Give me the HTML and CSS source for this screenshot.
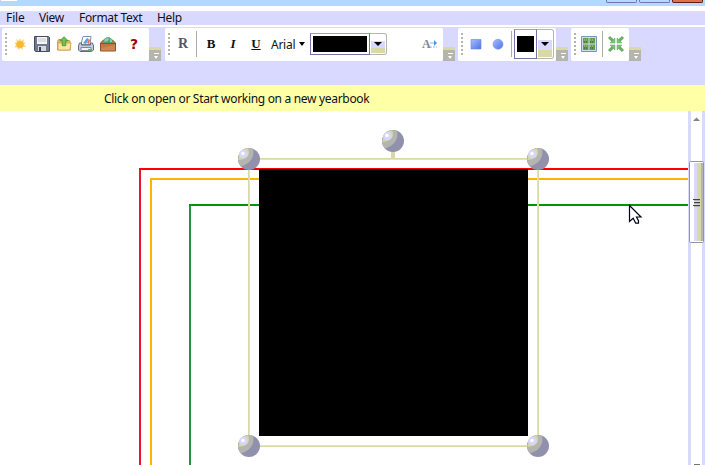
FILE: index.html
```html
<!DOCTYPE html>
<html lang="en">
<head>
<meta charset="utf-8">
<title>Yearbook editor</title>
<link rel="stylesheet" href="styles.css">
</head>
<body>
<div class="app">
  <header class="titlebar"><i class="app-icon"></i><i class="win"></i><i class="win"></i><i class="win close"></i></header>
  <nav class="menu"><span class="m-file">File</span><span class="m-view">View</span><span class="m-format">Format Text</span><span class="m-help">Help</span></nav>
  <div class="toolbars">
    <div class="group g1"><div class="tools">
      <i class="grip"></i>
      <svg class="icon" viewBox="0 0 16 16"><path d="M8 2l1.300 3L12 3.200l-.5 3.200L14 6.500 12 8.500l2 2.500-3.300-.3-.2 3.200L8.500 12 6 14l-.6-2.800-2.900.4 1.500-2.800L2.500 7l2.300-.8L4.300 3l2.700 1.800z" fill="#f9d581"/><circle cx="8" cy="8.500" r="3.600" fill="#fdb92c"/></svg>
      <svg class="icon" viewBox="0 0 16 16"><path d="M.5.5h14l1 1v14H1.500l-1-1z" fill="#717991" stroke="#454c60"/><path d="M3 1h10v7H3z" fill="#f5f5f5"/><path d="M4 3h8M4 5h8" stroke="#c5c8d0"/><path d="M4 10h8v5H4z" fill="#d5d8dd"/><path d="M5 11h2v4H5z" fill="#3d4250"/></svg>
      <svg class="icon" viewBox="0 0 16 16"><path d="M1.500 5.500l1-2h3l1 1h7l1 2v7.500h-13z" fill="#e9b65b" stroke="#c79b4d"/><path d="M2 7h13l-1 7H2z" fill="#ffe59e" stroke="#d5aa58"/><path d="M8 .7l4 4H9.800v5H6.200v-5H4z" fill="#6fc252" stroke="#3c903b" stroke-width=".8"/></svg>
      <svg class="icon" viewBox="0 0 16 16"><path d="M5 .5h8l-1 8H3z" fill="#fff" stroke="#7990b1"/><path d="M5 7l4-5 2 1-3 5z" fill="#55a5df"/><path d="M9 7l2-4 1 1-1 4z" fill="#e16b54"/><path d="M1.500 7h2v2h9V7h2l1 3v4l-2 1.500H2L.5 14v-4z" fill="#c5ccda" stroke="#626b82"/><path d="M3 11.500h10v3H3z" fill="#f2f4f8" stroke="#7e899c"/><path d="M10 14h4" stroke="#66b258" stroke-width="2"/></svg>
      <svg class="icon" viewBox="0 0 16 16"><path d="M.5 7L3.500 4h9l3 3v8H.5z" fill="#c17543" stroke="#8c522f"/><path d="M3 7a5 6 0 0 1 10 0z" fill="#4fa859"/><path d="M5 3l3-1.500 1 2-2 2H4zM10 2.500l2 1.500v2h-2z" fill="#8bc6dc"/><path d="M1 7.500h14" stroke="#8c522f"/><path d="M1 12l14-3v5.500H1z" fill="#da965f" opacity=".55"/></svg>
      <b class="question">?</b>
    </div><i class="overflow"></i></div>
    <div class="group g2"><div class="tools">
      <i class="grip"></i><b class="letter regular">R</b><i class="sep"></i><b class="letter bold">B</b><b class="letter italic">I</b><b class="letter under">U</b><span class="font-name">Arial</span><i class="caret"></i>
      <div class="combo wide"><div class="swatch"><i></i></div><div class="drop"><i class="caret"></i></div></div>
      <svg class="icon resize" viewBox="0 0 16 16"><text x="0" y="12">A</text><path d="M8 7h6" stroke="#8eb9ee"/><path d="M12 4l3 3-3 3z" fill="#4c95e9"/><path d="M8 11h7" stroke="#b2b7c7" stroke-dasharray="2 1"/></svg>
    </div><i class="overflow"></i></div>
    <div class="group g3"><div class="tools">
      <i class="grip"></i>
      <svg class="shape" viewBox="0 0 12 12"><defs><linearGradient id="blue" x2="1" y2="1"><stop stop-color="#a8bcff"/><stop offset="1" stop-color="#4f72e5"/></linearGradient></defs><path d="M1 1.500h10v9.500H1z" fill="url(#blue)" stroke="#6f83da" stroke-width=".6"/></svg>
      <svg class="shape second" viewBox="0 0 12 12"><circle cx="6" cy="6.300" r="5" fill="url(#blue)" stroke="#7790e9" stroke-width=".6"/></svg>
      <i class="sep"></i><div class="combo small"><div class="swatch"><i></i></div><div class="drop"><i class="caret"></i></div></div>
    </div><i class="overflow"></i></div>
    <div class="group g4"><div class="tools">
      <i class="grip"></i>
      <svg class="icon" viewBox="0 0 16 16"><path d="M.5.5h15v15H.5z" fill="#cddcef" stroke="#7895bf"/><path d="M2 2h5.500v5.500H2zM8.500 2H14v5.500H8.500zM2 8.500h5.500V14H2zM8.500 8.500H14V14H8.500z" fill="#669d4c"/><path d="M3 4h4M9 4h4M3 10h4M9 10h4" stroke="#b1d56f" stroke-dasharray="1 1"/><path d="M3 6h4M9 6h4M3 12h4M9 12h4" stroke="#315e35" stroke-dasharray="1 1"/></svg>
      <i class="sep"></i>
      <svg class="icon" viewBox="0 0 16 16"><path d="M1 1l4 4M15 1l-4 4M1 15l4-4M15 15l-4-4" stroke="#69ae65" stroke-width="3"/><path d="M7 2v5H2zM9 2v5h5zM7 14V9H2zM9 14V9h5z" fill="#7dc27a" stroke="#63a965" stroke-width=".5"/></svg>
    </div><i class="overflow"></i></div>
  </div>
  <div class="notice">Click on open or Start working on a new yearbook</div>
  <main class="workspace">
    <svg class="page" viewBox="0 111 688 354">
      <defs><g id="handle"><circle r="11" fill="#9291ad"/><path d="M-10.500-3A11 11 0 0 1 4-10.200C6-2 1 5-8 7.500A11 11 0 0 1-10.500-3z" fill="#b5b5b0"/><path d="M-9.500-5A11 11 0 0 1-1-10.800C2-4-2 0-10.500 1z" fill="#d5d5a8"/><circle cx="-5.500" cy="-5" r="4.300" fill="#d6d6f8"/><circle cx="-6" cy="-5.500" r="1.700" fill="#fff"/></g></defs>
      <g fill="none" stroke-width="2"><path d="M190 465V205H688" stroke="#009600"/><path d="M190 465V206" stroke="#22914a"/><path d="M151 465V179H688" stroke="#ffb400"/><path d="M140 465V169H688" stroke="#f00"/><path d="M140 465V170" stroke="#ef1235"/></g>
      <path d="M259 169h269v267H259z"/><path d="M259 168.500h269" stroke="#f00"/>
      <path d="M249 159.500h289M249.500 159v287M249 445.500h289M537.500 159v287" stroke="#dedfdc"/>
      <path d="M249 158.500h289M248.500 159v287M249 446.500h289M538.500 159v287" stroke="#d9d9a6"/>
      <path d="M393 150v8" stroke="#d9d9a6" stroke-width="4"/>
      <use href="#handle" x="249" y="159"/><use href="#handle" x="538" y="159"/><use href="#handle" x="393" y="141"/><use href="#handle" x="249" y="446"/><use href="#handle" x="538" y="446"/>
      <path d="M629.500 205.500v16l3.700-3.300 2.500 5h2.800v-2.500l-2-3.700h4.500z" fill="#fff" stroke="#000018" stroke-width="1.200"/>
    </svg>
    <aside class="scrollbar"><svg viewBox="0 0 17 354"><path d="M5 10l3.500-3.500L12 10z" fill="#85857d"/><rect x="1.500" y="50.500" width="14" height="81" rx="1" fill="#fff" stroke="#9292b1"/><path d="M6 52h3v78H6z" fill="#d9d9ff"/><path d="M9 52h4v78H9z" fill="#d9d9a6"/><path d="M13 52h2v78h-2z" fill="#b5b5b0"/><path d="M5 88.500h7M6 91.500h6M5 94.500h7" stroke="#424248"/><path d="M6 89.500h6M6 92.500h6M6 95.500h6" stroke="#b5b5b0"/><path d="M6 353.500h6" stroke="#74746b"/></svg></aside>
  </main>
</div>
</body>
</html>
```
FILE: styles.css
```css
* { box-sizing: border-box; }
body { margin: 0; overflow: hidden; background: #fff; color: #101018; font: 12px/14px "Noto Sans", "Open Sans", sans-serif; }
.app { width: 705px; height: 465px; display: flex; flex-direction: column; }
i { display: block; flex: none; }
svg { display: block; flex: none; }
.titlebar { height: 6px; background: #b3d9ff; display: flex; gap: 2px; padding-right: 2px; flex: none; }
.app-icon { width: 16px; height: 1px; background: #fff; margin: 0 auto 0 1px; }
.win { width: 31px; height: 3px; border: 1px solid #7474a9; border-top: 0; border-radius: 0 0 2px 2px; }
.close { background: #e56d50; border-color: #572019; }
.menu { margin-top: 5px; height: 14px; background: #d9d9ff; border-top: 1px solid #f0d9f5; display: flex; flex: none; line-height: 11px; padding-left: 6px; white-space: nowrap; }
.m-file { width: 33px; letter-spacing: -.1px; }
.m-view { width: 40px; letter-spacing: -.35px; }
.m-format { width: 78px; letter-spacing: -.33px; }
.m-help { letter-spacing: -.3px; }
.toolbars { margin-top: 2px; height: 58px; padding: 1px 0 0 2px; background: #d9d9ff; display: flex; align-items: flex-start; flex: none; }
.group { display: flex; align-items: flex-end; height: 33px; flex: none; }
.tools { height: 33px; background: #fff; border-radius: 2px; display: flex; align-items: center; flex: none; padding: 0 0 1px 3px; }
.g1 { width: 163px; }
.g1 .tools { width: 147px; gap: 6px; }
.g1 .grip { margin-right: -1px; }
.g2 { width: 293px; }
.g2 .tools { width: 278px; }
.g3 { width: 113px; }
.g3 .tools { width: 98px; }
.g4 .tools { width: 58px; }
.grip { width: 2px; height: 22px; background: repeating-linear-gradient(#b5b5b0 0 2px, transparent 2px 4px); }
.icon { width: 16px; height: 16px; }
.question { width: 16px; margin-left: 4px; color: #a00000; font: bold 14px "DejaVu Sans", sans-serif; text-align: center; }
.overflow { width: 12px; height: 14px; background: linear-gradient(#d9d9a6 0 3px, #b5b5b0 3px); position: relative; }
.overflow::before { content: ""; position: absolute; left: 5px; top: 6px; width: 5px; height: 1px; background: #fff; }
.overflow::after { content: ""; position: absolute; left: 5px; top: 9px; border: 2.5px solid transparent; border-top: 3px solid #fff; }
.letter { width: 16px; text-align: center; font: bold 12px/16px "DejaVu Serif", serif; }
.regular { margin-left: 5px; color: #55556d; font: bold 14px/16px "Liberation Serif", serif; }
.sep { width: 1px; height: 26px; background: #adada4; margin-left: 5px; }
.bold { margin-left: 6px; font: bold 13px/16px "Liberation Serif", serif; }
.italic { margin-left: 6px; font: italic bold 13px/16px "Liberation Serif", serif; }
.under { margin-left: 7px; font: bold 13px/16px "Liberation Serif", serif; text-decoration: underline; }
.font-name { margin-left: 7px; width: 28px; padding-top: 1px; letter-spacing: -.25px; }
.caret { width: 0; border: 3.5px solid transparent; border-top: 4px solid #000; border-bottom: 0; }
.combo { display: flex; }
.wide { width: 77px; height: 22px; margin-left: 5px; }
.swatch { flex: 1; border: 1px solid #7474a9; border-top-color: #82b4a4; padding: 2px; background: #fff; }
.swatch i { height: 100%; background: #000; }
.drop { width: 17px; border: 1px solid #b5b5b0; border-left: 0; border-radius: 0 3px 3px 0; padding: 1px; display: flex; align-items: center; justify-content: center; background: linear-gradient(#d9d9ff 0 58%, #d9d9a6 58%) 1px 7px / 14px 12px no-repeat #fff; }
.drop .caret { border-width: 4px 4px 0; }
.resize { margin-left: 35px; }
.resize text { font: bold 12px "Liberation Serif", serif; fill: #858595; }
.shape { width: 12px; height: 12px; margin-left: 7px; }
.second { margin-left: 10px; }
.g3 .sep { margin-left: 7px; }
.small { width: 40px; height: 30px; margin-left: 2px; }
.small .swatch { padding: 6px 2px; }
.small .drop { background-position: 1px 10px; background-size: 14px 17px; }
.g4 .grip { margin-right: 5px; }
.g4 .sep { margin-right: 5px; }
.notice { height: 26px; flex: none; padding-left: 104px; background: #ffffa6; line-height: 28px; letter-spacing: -.31px; white-space: nowrap; }
.workspace { display: flex; height: 354px; flex: none; }
.page { width: 688px; height: 354px; }
.scrollbar { width: 17px; background: linear-gradient(90deg, #d9d9ff 0 3px, #fff 3px 14px, #d9d9ff 14px); }
```
